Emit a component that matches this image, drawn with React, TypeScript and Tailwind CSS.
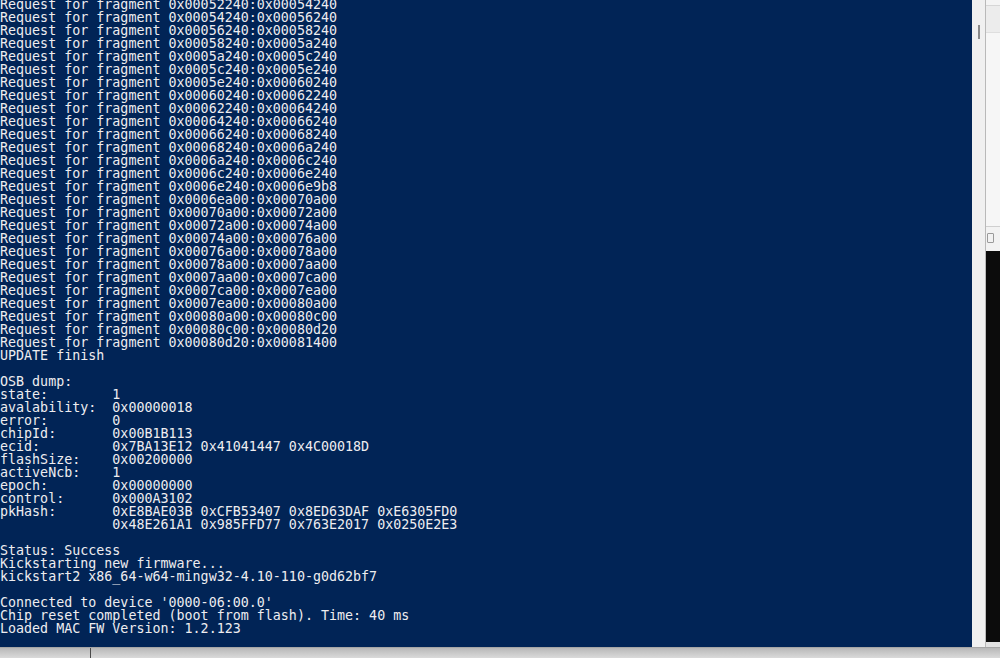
const ranges = [
  '0x00052240:0x00054240',
  '0x00054240:0x00056240',
  '0x00056240:0x00058240',
  '0x00058240:0x0005a240',
  '0x0005a240:0x0005c240',
  '0x0005c240:0x0005e240',
  '0x0005e240:0x00060240',
  '0x00060240:0x00062240',
  '0x00062240:0x00064240',
  '0x00064240:0x00066240',
  '0x00066240:0x00068240',
  '0x00068240:0x0006a240',
  '0x0006a240:0x0006c240',
  '0x0006c240:0x0006e240',
  '0x0006e240:0x0006e9b8',
  '0x0006ea00:0x00070a00',
  '0x00070a00:0x00072a00',
  '0x00072a00:0x00074a00',
  '0x00074a00:0x00076a00',
  '0x00076a00:0x00078a00',
  '0x00078a00:0x0007aa00',
  '0x0007aa00:0x0007ca00',
  '0x0007ca00:0x0007ea00',
  '0x0007ea00:0x00080a00',
  '0x00080a00:0x00080c00',
  '0x00080c00:0x00080d20',
  '0x00080d20:0x00081400',
];

const lines = [
  ...ranges.map(r => `Request for fragment ${r}`),
  'UPDATE finish',
  '',
  'OSB dump:',
  'state:        1',
  'avalability:  0x00000018',
  'error:        0',
  'chipId:       0x00B1B113',
  'ecid:         0x7BA13E12 0x41041447 0x4C00018D',
  'flashSize:    0x00200000',
  'activeNcb:    1',
  'epoch:        0x00000000',
  'control:      0x000A3102',
  'pkHash:       0xE8BAE03B 0xCFB53407 0x8ED63DAF 0xE6305FD0',
  '              0x48E261A1 0x985FFD77 0x763E2017 0x0250E2E3',
  '',
  'Status: Success',
  'Kickstarting new firmware...',
  'kickstart2 x86_64-w64-mingw32-4.10-110-g0d62bf7',
  '',
  "Connected to device '0000-06:00.0'",
  'Chip reset completed (boot from flash). Time: 40 ms',
  'Loaded MAC FW Version: 1.2.123',
];

const Terminal = () => (
  <div className="w-[972px] h-full bg-[#012456] overflow-hidden">
    <pre
      className="-mt-[2px] text-[13.33px] leading-[13px] text-[#eeedf0] whitespace-pre"
      style={{ fontFamily: '"DejaVu Sans Mono", "Liberation Mono", monospace' }}
    >
      {lines.map((line, i) => (
        <div key={i} className="h-[13px]">
          {line}
        </div>
      ))}
    </pre>
  </div>
);

const ScrollBar = () => (
  <div className="w-[14px] h-full bg-[#f0f0f0] border-r border-[#b9b9b9] flex justify-center pt-[25px]">
    <div className="w-[2px] h-[14px] bg-[#8a8a8a]" />
  </div>
);

const BackWindow = () => (
  <div className="flex-1 h-full flex flex-col bg-[#f7f7f7]">
    <div className="h-[6px] bg-[#f4f4f4] border-b border-[#d6d6d6]" />
    <div className="h-[27px] bg-[#ececec] border-b border-[#dedede]" />
    <div className="h-[194px] bg-[#f6f6f6] border-b border-[#cfcfcf]" />
    <div className="h-[24px] bg-[#f2f2f2] pt-[6px] pl-[1px]">
      <div className="w-[7px] h-[10px] border border-[#9a9a9a] rounded-[1px]" />
    </div>
    <div className="flex-1 bg-[#0c0c0c]" />
    <div className="h-[5px] bg-[#e2e2e2]" />
  </div>
);

export default function App() {
  return (
    <div className="w-[1000px] h-[658px] flex flex-col overflow-hidden bg-white">
      <div className="h-[647px] flex">
        <Terminal />
        <ScrollBar />
        <BackWindow />
      </div>
      <div className="flex-1 bg-gradient-to-b from-[#b8b8b8] to-[#dadada] border-t border-[#a6a6a6] pl-[90px]">
        <div className="w-px h-full bg-[#4a4a4a]" />
      </div>
    </div>
  );
}
